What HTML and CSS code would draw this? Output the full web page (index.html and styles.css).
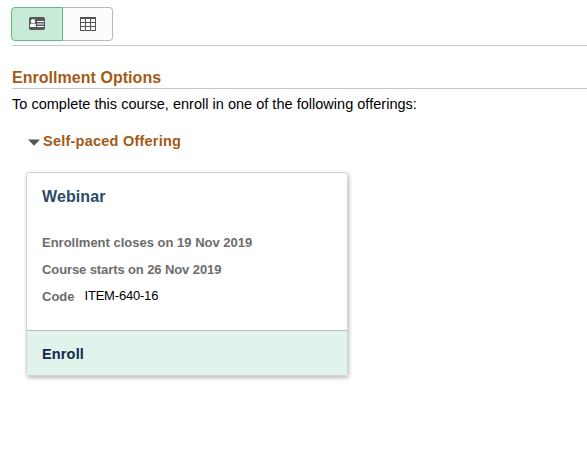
FILE: index.html
```
<!DOCTYPE html>
<html lang="en">
<head>
<meta charset="utf-8">
<title>Enrollment Options</title>
<link rel="stylesheet" href="styles.css">
</head>
<body>
<main class="page">
  <header class="toolbar">
    <div class="toggle">
      <button class="toggle-btn toggle-btn-active" aria-label="Card view">
        <svg width="16" height="13" viewBox="0 0 16 13">
          <rect width="16" height="13" rx="1.8" fill="#555958"/>
          <circle cx="4" cy="4.2" r="2.1" fill="#fff"/>
          <path d="M1 10V8.2Q1 6.6 2.8 6.2L4 7L5.2 6.2Q7 6.6 7 8.2V10Z" fill="#fff"/>
          <path d="M8 4.5h7M8 7h7M8 9.5h7" stroke="#fff" stroke-width="1.1"/>
        </svg>
      </button>
      <button class="toggle-btn" aria-label="Grid view">
        <svg width="16" height="14" viewBox="0 0 16 14">
          <path fill="#555" fill-rule="evenodd" d="M0 0h16v14H0ZM1 2v3h4V2ZM6 2v3h4V2ZM11 2v3h4V2ZM1 6v3h4V6ZM6 6v3h4V6ZM11 6v3h4V6ZM1 10v3h4v-3ZM6 10v3h4v-3ZM11 10v3h4v-3Z"/>
        </svg>
      </button>
    </div>
  </header>
  <h1 class="title"><span>Enrollment Options</span></h1>
  <p class="intro">To complete this course, enroll in one of the following offerings:</p>
  <section class="offering">
    <h2 class="offering-title">
      <svg width="12" height="7" viewBox="0 0 12 7"><path d="M0 .5h12L6 6.8Z" fill="#555"/></svg>
      <span>Self-paced Offering</span>
    </h2>
    <article class="card">
      <div class="card-body">
        <h3 class="card-title">Webinar</h3>
        <p class="detail closes">Enrollment closes on 19 Nov 2019</p>
        <p class="detail starts">Course starts on 26 Nov 2019</p>
        <p class="detail code"><span>Code</span><span class="code-value">ITEM-640-16</span></p>
      </div>
      <a class="enroll">Enroll</a>
    </article>
  </section>
</main>
</body>
</html>
```
FILE: styles.css
```
* { box-sizing: border-box; }
body {
  margin: 0;
  background: #fff;
  color: #000;
  font-family: "Liberation Sans", Arial, sans-serif;
}
h1, h2, h3, p { margin: 0; }
.page { min-height: 469px; padding: 7px 0 0 12px; }
.toolbar {
  height: 39px;
  border-bottom: 1px solid #c8c8c8;
}
.toggle { display: flex; margin-left: -1px; }
.toggle-btn {
  display: flex;
  align-items: center;
  justify-content: center;
  width: 50px;
  height: 34px;
  padding: 0;
  border: 1px solid #b9b9b9;
  border-left: 0;
  border-radius: 0 4px 4px 0;
  background: #fcfcfc;
}
.toggle-btn-active {
  width: 52px;
  padding-bottom: 1px;
  border: 1px solid #5fba8b;
  border-radius: 4px 0 0 4px;
  background: #c9ead7;
}
.title {
  height: 43px;
  padding-top: 23px;
  border-bottom: 1px solid #c8c8c8;
  color: #a35a17;
  font-size: 16px;
  letter-spacing: .04px;
  line-height: 18px;
}
.intro {
  margin-top: 7px;
  font-size: 14.5px;
  letter-spacing: .02px;
  line-height: 17px;
  white-space: nowrap;
}
.offering { padding: 20px 0 0 14px; }
.offering-title {
  display: flex;
  align-items: center;
  gap: 3px;
  padding-left: 2px;
  color: #a35a17;
  font-size: 14.5px;
  letter-spacing: .23px;
  line-height: 17px;
}
.offering-title svg { margin-top: 2px; }
.card {
  display: flex;
  flex-direction: column;
  width: 322px;
  height: 204px;
  margin-top: 22px;
  border: 1px solid #d2d2d2;
  border-radius: 3px;
  box-shadow: 1px 2px 4px rgba(0, 0, 0, .27);
}
.card-body { flex: 1; padding: 15px 15px 0; }
.card-title {
  color: #2d4a66;
  font-size: 16px;
  letter-spacing: .1px;
  line-height: 18px;
}
.detail {
  color: #6d6d6d;
  font-size: 13px;
  font-weight: bold;
  line-height: 15px;
  margin-top: 12px;
}
.closes { margin-top: 29px; }
.starts { letter-spacing: -.1px; }
.code { display: flex; gap: 10px; }
.code-value {
  margin-top: -1px;
  color: #000;
  font-weight: normal;
  letter-spacing: -.2px;
}
.enroll {
  height: 45px;
  padding: 15px 15px 0;
  border-top: 1px solid #bcbcbc;
  background: #e0f4eb;
  color: #17284a;
  font-size: 14.5px;
  font-weight: bold;
  letter-spacing: .15px;
  line-height: 17px;
}
```
